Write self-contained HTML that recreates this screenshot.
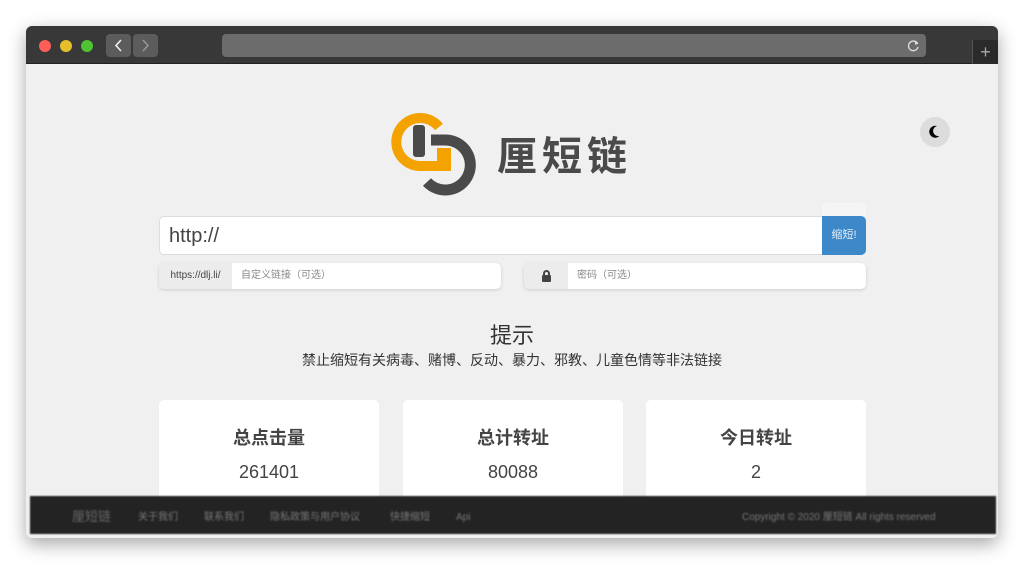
<!DOCTYPE html>
<html><head><meta charset="utf-8"><style>
*{box-sizing:border-box;margin:0;padding:0}
body{width:1024px;height:565px;background:#fff;position:relative;overflow:hidden;font-family:"Liberation Sans","Noto Sans CJK SC",sans-serif;}
.win{position:absolute;left:26px;top:26px;width:972px;height:512px;border-radius:6px;background:#f0f0f0;box-shadow:0 6px 18px rgba(0,0,0,.35);overflow:hidden}
.tb{position:absolute;left:0;top:0;width:972px;height:38px;background:#383838;border-bottom:1px solid #222}
.dot{position:absolute;top:14px;width:12px;height:12px;border-radius:50%}
.nav{position:absolute;top:8px;width:25px;height:23px;background:#5c5c5c;border-radius:4px}
.url{position:absolute;left:196px;top:8px;width:704px;height:23px;background:#6c6c6c;border-radius:4px}
.tab{position:absolute;left:946px;top:14px;width:26px;height:24px;background:#2a2a2a;border-left:1px solid #555;color:#aaa;font-size:18px;text-align:center;line-height:24px}
.abs{position:absolute}
.card{position:absolute;top:374px;width:220px;height:120px;background:#fff;border-radius:5px;text-align:center;color:#444}
.card h3{margin-top:24px;font-size:18px;font-weight:bold}
.card p{margin-top:12px;font-size:18px}
.footer{position:absolute;left:4px;top:470px;width:966px;height:38px;background:#232323;color:#777;font-size:10px;filter:blur(0.8px)}
.footer span{position:absolute;top:16px;line-height:12px}
</style></head><body>
<div class="win">
<div class="tb">
<div class="dot" style="left:13px;background:#fe5f57"></div>
<div class="dot" style="left:34px;background:#e6bf2a"></div>
<div class="dot" style="left:55px;background:#4fc332"></div>
<div class="nav" style="left:80px"><svg width="25" height="23"><path d="M15 6 L10 11.5 L15 17" fill="none" stroke="#eee" stroke-width="1.6"/></svg></div>
<div class="nav" style="left:107px"><svg width="25" height="23"><path d="M10 6 L15 11.5 L10 17" fill="none" stroke="#999" stroke-width="1.4"/></svg></div>
<div class="url"><svg style="position:absolute;right:6px;top:5px" width="13" height="13"><path d="M10.5 4.5 A4.8 4.8 0 1 0 11 8" fill="none" stroke="#ddd" stroke-width="1.4"/><path d="M8 1.5 L11.5 4.8 L8 5.8 Z" fill="#ddd"/></svg></div>
<div class="tab">+</div>
</div>
<div class="abs" style="left:894px;top:91px;width:30px;height:30px;border-radius:50%;background:#dcdcdc"><svg width="30" height="30"><path d="M17 9 A6 6 0 1 0 19.5 19 A5 5 0 0 1 17 9 Z" fill="#000"/></svg></div>
<svg class="abs" style="left:-26px;top:-26px" width="1024" height="300">
<path d="M439 127 A24 24 0 1 0 419 166 L440 166" fill="none" stroke="#f4a200" stroke-width="10"/>
<rect x="437" y="148" width="14" height="23" fill="#f4a200"/>
<path d="M431 140 L446 140 A25 25 0 1 1 427 182" fill="none" stroke="#4a4a4a" stroke-width="11"/>
<rect x="413" y="125" width="12" height="32" rx="3" fill="#4a4a4a"/>
</svg>
<div class="abs" style="left:471px;top:104px;font-size:40px;color:#4a4a4a;letter-spacing:5px;font-weight:bold;font-family:'Noto Sans CJK SC',sans-serif;line-height:46px">厘短链</div>
<div class="abs" style="left:133px;top:190px;width:664px;height:39px;background:#fff;border:1px solid #ddd;border-radius:5px 0 0 5px;font-size:20px;color:#444;padding:8px 9px">http://</div>
<div class="abs" style="left:796px;top:177px;width:44px;height:14px;background:#f5f5f5;border-radius:4px 4px 0 0"></div>
<div class="abs" style="left:796px;top:190px;width:44px;height:39px;background:#3d88c9;border-radius:0 5px 5px 0;color:#e8f0f8;font-size:11px;text-align:center;line-height:39px">缩短!</div>
<div class="abs" style="left:133px;top:237px;width:342px;height:26px;background:#fff;border-radius:5px;box-shadow:0 1px 3px rgba(0,0,0,.15)">
<div style="width:73px;height:26px;background:#ececec;border-radius:5px 0 0 5px;font-size:10px;color:#444;line-height:26px;text-align:center">https://dlj.li/</div>
<span style="position:absolute;left:82px;top:0;font-size:10px;color:#888;line-height:26px">自定义链接（可选）</span></div>
<div class="abs" style="left:498px;top:237px;width:342px;height:26px;background:#fff;border-radius:5px;box-shadow:0 1px 3px rgba(0,0,0,.15)">
<div style="width:44px;height:26px;background:#ececec;border-radius:5px 0 0 5px;position:relative">
<div style="position:absolute;left:18px;top:12px;width:9px;height:7px;background:#444;border-radius:1px"></div>
<div style="position:absolute;left:19px;top:7px;width:7px;height:8px;border:2px solid #444;border-radius:4px 4px 0 0"></div></div>
<span style="position:absolute;left:53px;top:0;font-size:10px;color:#888;line-height:26px">密码（可选）</span></div>
<div class="abs" style="left:0;width:972px;top:292px;text-align:center;font-size:22px;color:#333">提示</div>
<div class="abs" style="left:0;width:972px;top:324px;text-align:center;font-size:14px;color:#333">禁止缩短有关病毒、赌博、反动、暴力、邪教、儿童色情等非法链接</div>
<div class="card" style="left:133px"><h3>总点击量</h3><p>261401</p></div>
<div class="card" style="left:377px"><h3>总计转址</h3><p>80088</p></div>
<div class="card" style="left:620px"><h3>今日转址</h3><p>2</p></div>
<div class="footer">
<span style="left:42px;font-size:13px;top:14px;line-height:14px;color:#666">厘短链</span>
<span style="left:108px">关于我们</span><span style="left:174px">联系我们</span><span style="left:240px">隐私政策与用户协议</span><span style="left:360px">快捷缩短</span><span style="left:426px">Api</span>
<span style="left:712px">Copyright © 2020 厘短链 All rights reserved</span>
</div>
</div>
</body></html>
